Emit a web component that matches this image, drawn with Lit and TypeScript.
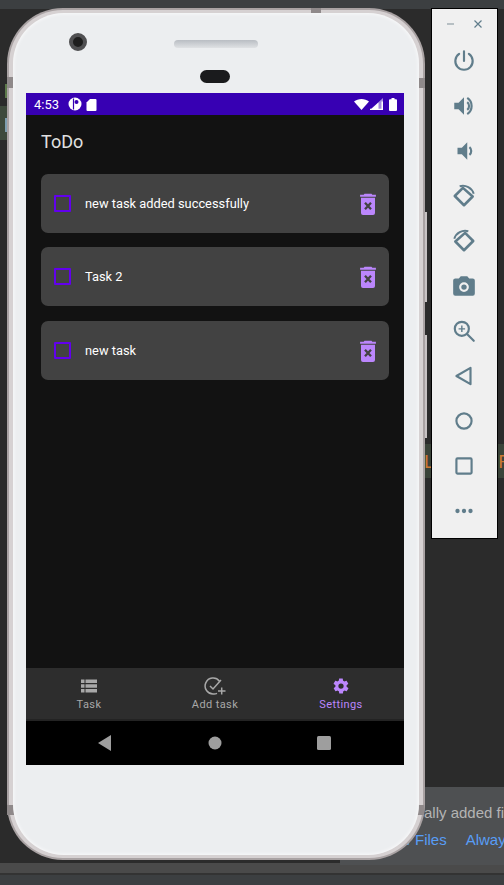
import { LitElement, html, css, svg } from "lit";
import { customElement } from "lit/decorators.js";

const tool = (body: unknown) => html`<div class="tool"><svg width="26" height="26" viewBox="0 0 24 24" fill="#607d8b">${body}</svg></div>`;

const trash = html`<svg class="trash" width="24" height="24" viewBox="0 0 24 24">
  <path fill="#bb86fc" d="M8.500 1.800h7l.8 1h3.600v2H4.100v-2h3.600zM5 5.800h14V21a2 2 0 0 1-2 2H7a2 2 0 0 1-2-2z"/>
  <path stroke="#424242" stroke-width="2.300" fill="none" d="M9 10.800l6 6.400M15 10.800l-6 6.400"/>
</svg>`;

const tasks = ["new task added successfully", "Task 2", "new task"];

@customElement("app-root")
export class AppRoot extends LitElement {
  static styles = css`
    :host { display: block; position: relative; width: 504px; height: 885px; overflow: hidden; background: #2b2b2b; font-family: Roboto, "Liberation Sans", sans-serif; }
    .topstrip { position: absolute; left: 0; top: 0; width: 504px; height: 9px; background: #3c3f41; }
    .status-bottom { position: absolute; left: 0; top: 863px; width: 504px; height: 22px; background: #4a4a4a; }
    .status-bottom i { display: block; margin-top: 10px; height: 2px; background: #333; }
    .status-bottom b { display: block; height: 10px; background: #3c3f41; }
    .artifact { position: absolute; }
    .a1 { left: 0; top: 106px; width: 8px; height: 34px; background: #3e4a3c; }
    .a2 { left: 5px; top: 84px; width: 3px; height: 14px; background: #5d7a4b; }
    .a4 { left: 5px; top: 118px; width: 3px; height: 14px; background: #7f9fb0; }
    .band { position: absolute; left: 424px; top: 444px; width: 80px; height: 34px; background: #3a4339; color: #cc7832; font-size: 19px; line-height: 36px; font-family: "Liberation Sans", sans-serif; display: flex; justify-content: space-between; overflow: hidden; }
    .band span:last-child { margin-right: -8px; }
    .popup { position: absolute; left: 340px; top: 787px; width: 164px; height: 78px; background: #4e5052; box-sizing: border-box; padding: 14px 0 0 84px; font-size: 15px; line-height: 24px; white-space: nowrap; font-family: "Liberation Sans", sans-serif; color: #b4b4b4; overflow: hidden; }
    .popup .links { display: flex; gap: 19px; margin: 3px 0 0 -24px; color: #589df6; }
    .button { position: absolute; left: 424px; width: 3px; background: #c8c3c4; }
    .b1 { top: 212px; height: 90px; }
    .b2 { top: 335px; height: 103px; }
    .phone { position: absolute; left: 7px; top: 8px; width: 418px; height: 852px; box-sizing: border-box; border-radius: 56px; padding: 2px; background: #a9a2a3; }
    .frame { height: 100%; box-sizing: border-box; border-radius: 54px; padding: 3px 4px; background: #d6d1d2; }
    .bezel { position: relative; height: 100%; box-sizing: border-box; border-radius: 51px; background: #eceef0; padding: 80px 15px 0 13px; box-shadow: inset 0 0 4px #fff; }
    .notch { position: absolute; background: #8f898a; }
    .n1 { left: 0; top: 69px; width: 7px; height: 11px; }
    .n2 { right: 0; top: 70px; width: 8px; height: 10px; }
    .n3 { left: 304px; top: 0; width: 10px; height: 5px; }
    .n4 { left: 0; top: 797px; width: 7px; height: 10px; }
    .n5 { right: 1px; top: 797px; width: 7px; height: 10px; }
    .camera { position: absolute; left: 56px; top: 20px; width: 18px; height: 18px; border-radius: 50%; box-sizing: border-box; border: 4px solid #505052; background: #1e1e1e; }
    .speaker { position: absolute; left: 161px; top: 27px; width: 84px; height: 8px; border-radius: 4px; background: linear-gradient(#b9bdc3, #dfe1e4); }
    .pill { position: absolute; left: 187px; top: 57px; width: 30px; height: 13px; border-radius: 7px; background: #1a1b1d; }
    .screen { height: 672px; display: flex; flex-direction: column; background: #121212; width: 378px; }
    .statusbar { height: 22px; flex: none; background: #3700b3; display: flex; align-items: center; padding: 0 7px 0 8px; color: #fff; font-size: 13px; font-weight: 400; }
    .statusbar .t { width: 34px; }
    .statusbar .sp { flex: 1; }
    .title { height: 59px; flex: none; box-sizing: border-box; padding: 15px 15px 0; color: #e0e0e0; font-size: 18px; font-weight: 400; line-height: 24px; letter-spacing: .05px; }
    .list { flex: 1; display: flex; flex-direction: column; gap: 14px; padding: 0 15px; }
    .card { height: 59px; flex: none; border-radius: 7px; background: #424242; display: flex; align-items: center; padding: 0 9px 0 13px; color: #fff; font-size: 12.85px; }
    .card:last-child { margin-top: 1px; }
    .check { width: 17px; height: 17px; box-sizing: border-box; border: 2px solid #6200ee; border-radius: 1px; margin-right: 14px; }
    .label { flex: 1; }
    .nav { height: 51px; flex: none; background: #2d2d2d; display: grid; grid-template-columns: repeat(3, 1fr); }
    .nav div { display: flex; flex-direction: column; align-items: center; padding-top: 9px; color: #a8a8a8; font-size: 11px; letter-spacing: .4px; line-height: 13px; gap: 3px; }
    .nav svg { display: block; }
    .nav .on { color: #bb86fc; }
    .gap { height: 2px; flex: none; background: #232323; }
    .sys { height: 44px; flex: none; background: #000; display: flex; align-items: center; justify-content: space-between; padding: 0 73px 0 72px; }
    .tb { position: absolute; left: 431px; top: 8px; width: 67px; height: 531px; box-sizing: border-box; border: 1px solid #000; background: #f0f0f0; display: flex; flex-direction: column; align-items: center; }
    .winbtns { height: 28px; width: 100%; flex: none; box-sizing: border-box; padding: 0 14px; display: flex; justify-content: space-between; align-items: center; margin-top: 1px; }
    .tool { height: 45px; width: 100%; flex: none; display: flex; justify-content: center; align-items: center; padding-right: 1px; box-sizing: border-box; }
    .tool svg { display: block; }
    .tools { display: flex; flex-direction: column; width: 100%; }
  `;

  render() {
    return html`
      <div class="topstrip"></div>
      <div class="artifact a1"></div>
      <div class="artifact a2"></div>
      <div class="artifact a4"></div>
      <div class="band"><span>L</span><span>R</span></div>
      <div class="status-bottom"><i></i><b></b></div>
      <div class="popup">
        <div>ally added fi</div>
        <div class="links"><span>w Files</span><span>Alway</span></div>
      </div>
      <div class="button b1"></div>
      <div class="button b2"></div>
      <div class="phone">
        <div class="notch n1"></div><div class="notch n2"></div><div class="notch n3"></div><div class="notch n4"></div><div class="notch n5"></div>
        <div class="frame"><div class="bezel">
        <div class="camera"></div><div class="speaker"></div><div class="pill"></div>
        <div class="screen">
          <div class="statusbar">
            <span class="t">4:53</span>
            <svg width="14" height="14" viewBox="0 0 14 14"><circle cx="7" cy="7" r="6.500" fill="#fff"/><path d="M5.500 1.500v11" stroke="#3700b3" stroke-width="1.200"/><circle cx="8.500" cy="5" r="2" fill="#3700b3"/></svg>
            <svg style="margin-left:4px" width="11" height="13" viewBox="0 0 11 13"><path fill="#fff" d="M4 1h5.500A1 1 0 0 1 10.500 2v10a1 1 0 0 1-1 1h-8a1 1 0 0 1-1-1V4.500z"/></svg>
            <span class="sp"></span>
            <svg width="15" height="12" viewBox="0 0 15 12"><path fill="#fff" d="M0 3.500C4 0 11 0 15 3.500L7.500 12z"/></svg>
            <svg style="margin-left:1px" width="13" height="12" viewBox="0 0 13 12"><path fill="#fff" fill-opacity=".55" d="M13 0v12H0z"/><path fill="#fff" d="M8.500 4.500V12H0zM11.500 3.500h1.500V12h-1.500zM0 10.800h13V12H0z"/></svg>
            <svg style="margin-left:6px" width="8" height="13" viewBox="0 0 8 13"><path fill="#fff" d="M2.500 0h3v1.300H7a1 1 0 0 1 1 1V12a1 1 0 0 1-1 1H1a1 1 0 0 1-1-1V2.300a1 1 0 0 1 1-1h1.500z"/></svg>
          </div>
          <div class="title">ToDo</div>
          <div class="list">
            ${tasks.map((t) => html`<div class="card"><div class="check"></div><div class="label">${t}</div>${trash}</div>`)}
          </div>
          <div class="nav">
            <div>
              <svg width="18" height="18" viewBox="0 0 18 18" fill="#a8a8a8"><path d="M1 2.500h3.500v3.600H1zM5.500 2.500H17v3.600H5.500zM1 7.200h3.500v3.600H1zM5.500 7.200H17v3.600H5.500zM1 11.900h3.500v3.600H1zM5.500 11.900H17v3.600H5.500z"/></svg>
              <span>Task</span>
            </div>
            <div>
              <svg width="22" height="18" viewBox="0 0 22 18" fill="none" stroke="#a8a8a8" stroke-width="1.500"><path d="M15.500 4.200A8 8 0 1 0 10 17a8 8 0 0 0 3-.6"/><path d="M6 9l3 3 8-9"/><path d="M14 14h7.500M17.700 10.500V17.500"/></svg>
              <span>Add task</span>
            </div>
            <div class="on">
              <svg width="18" height="18" viewBox="0 0 24 24" fill="#bb86fc"><path fill-rule="evenodd" d="M19.400 13c.1-.3.1-.6.1-1s0-.7-.1-1l2.100-1.600c.2-.2.2-.4.1-.6l-2-3.500c-.1-.2-.4-.3-.6-.2l-2.500 1c-.5-.4-1.100-.7-1.700-1l-.4-2.600c0-.3-.2-.5-.5-.5h-4c-.3 0-.5.2-.5.5l-.4 2.600c-.6.3-1.200.6-1.700 1l-2.500-1c-.2-.1-.5 0-.6.2l-2 3.500c-.1.2-.1.4.1.6L4.600 11c-.1.3-.1.7-.1 1s0 .7.1 1l-2.100 1.600c-.2.2-.2.4-.1.6l2 3.500c.1.2.4.3.6.2l2.500-1c.5.4 1.100.7 1.700 1l.4 2.600c0 .3.2.5.5.5h4c.3 0 .5-.2.5-.5l.4-2.600c.6-.3 1.200-.6 1.700-1l2.500 1c.2.1.5 0 .6-.2l2-3.500c.1-.2.1-.4-.1-.6zM12 15.500a3.500 3.500 0 1 1 0-7 3.500 3.500 0 0 1 0 7z"/></svg>
              <span>Settings</span>
            </div>
          </div>
          <div class="gap"></div>
          <div class="sys">
            <svg width="14" height="16" viewBox="0 0 14 16"><path fill="#9e9e9e" d="M13 0v16L0 8z"/></svg>
            <svg width="14" height="14" viewBox="0 0 14 14"><circle cx="7" cy="7" r="6.500" fill="#9e9e9e"/></svg>
            <svg width="14" height="14" viewBox="0 0 14 14"><rect width="14" height="14" rx="1.500" fill="#9e9e9e"/></svg>
          </div>
        </div>
      </div></div></div>
      <div class="tb">
        <div class="winbtns">
          <svg width="10" height="10" viewBox="0 0 10 10"><path d="M1 5h7" stroke="#7f8f97" stroke-width="1"/></svg>
          <svg width="10" height="10" viewBox="0 0 10 10"><path d="M1.500 1.500l7 7M8.500 1.500l-7 7" stroke="#607d8b" stroke-width="1.200"/></svg>
        </div>
        <div class="tools">
          ${tool(svg`<path fill="none" stroke="#607d8b" stroke-width="2" stroke-linecap="round" d="M12 3v9M7.500 5.500a8 8 0 1 0 9 0"/>`)}
          ${tool(svg`<path d="M3 9v6h4l5 5V4L7 9z"/><path fill="none" stroke="#607d8b" stroke-width="2" d="M15 8.500a4.500 4.500 0 0 1 0 7M15 4.500a9 9 0 0 1 0 15"/>`)}
          ${tool(svg`<path d="M6 9v6h4l5 5V4l-5 5z"/><path fill="none" stroke="#607d8b" stroke-width="2" d="M17 8.500a4.500 4.500 0 0 1 0 7"/>`)}
          ${tool(svg`<path fill="none" stroke="#607d8b" stroke-width="2.400" stroke-linejoin="round" d="M11 4.500L3.500 12l8.500 8.500 8-8z"/><path fill="none" stroke="#607d8b" stroke-width="1.800" d="M8 3a10.500 10.500 0 0 1 13 7"/>`)}
          ${tool(svg`<path fill="none" stroke="#607d8b" stroke-width="2.400" stroke-linejoin="round" d="M13 4.500l7.500 7.500-8.500 8.500-8-8z"/><path fill="none" stroke="#607d8b" stroke-width="1.800" d="M16 3a10.500 10.500 0 0 0-13 7"/>`)}
          ${tool(svg`<path fill-rule="evenodd" d="M9 3l-1.800 2H4a2 2 0 0 0-2 2v12a2 2 0 0 0 2 2h16a2 2 0 0 0 2-2V7a2 2 0 0 0-2-2h-3.200L15 3zM12 17.500a4.500 4.500 0 1 1 0-9 4.500 4.500 0 0 1 0 9zM12 15.500a2.500 2.500 0 1 0 0-5 2.500 2.500 0 0 0 0 5z"/>`)}
          ${tool(svg`<circle cx="10" cy="10" r="6.500" fill="none" stroke="#607d8b" stroke-width="2"/><path fill="none" stroke="#607d8b" stroke-width="2" stroke-linecap="round" d="M15 15l6 6"/><path fill="none" stroke="#607d8b" stroke-width="1.300" d="M10 7v6M7 10h6"/>`)}
          ${tool(svg`<path fill="none" stroke="#607d8b" stroke-width="2" stroke-linejoin="round" d="M18 4.500v15L5 12z"/>`)}
          ${tool(svg`<circle cx="12" cy="12" r="7" fill="none" stroke="#607d8b" stroke-width="2"/>`)}
          ${tool(svg`<rect x="5" y="5" width="14" height="14" rx="1" fill="none" stroke="#607d8b" stroke-width="2"/>`)}
          ${tool(svg`<circle cx="6" cy="12" r="2"/><circle cx="12" cy="12" r="2"/><circle cx="18" cy="12" r="2"/>`)}
        </div>
      </div>
    `;
  }
}
